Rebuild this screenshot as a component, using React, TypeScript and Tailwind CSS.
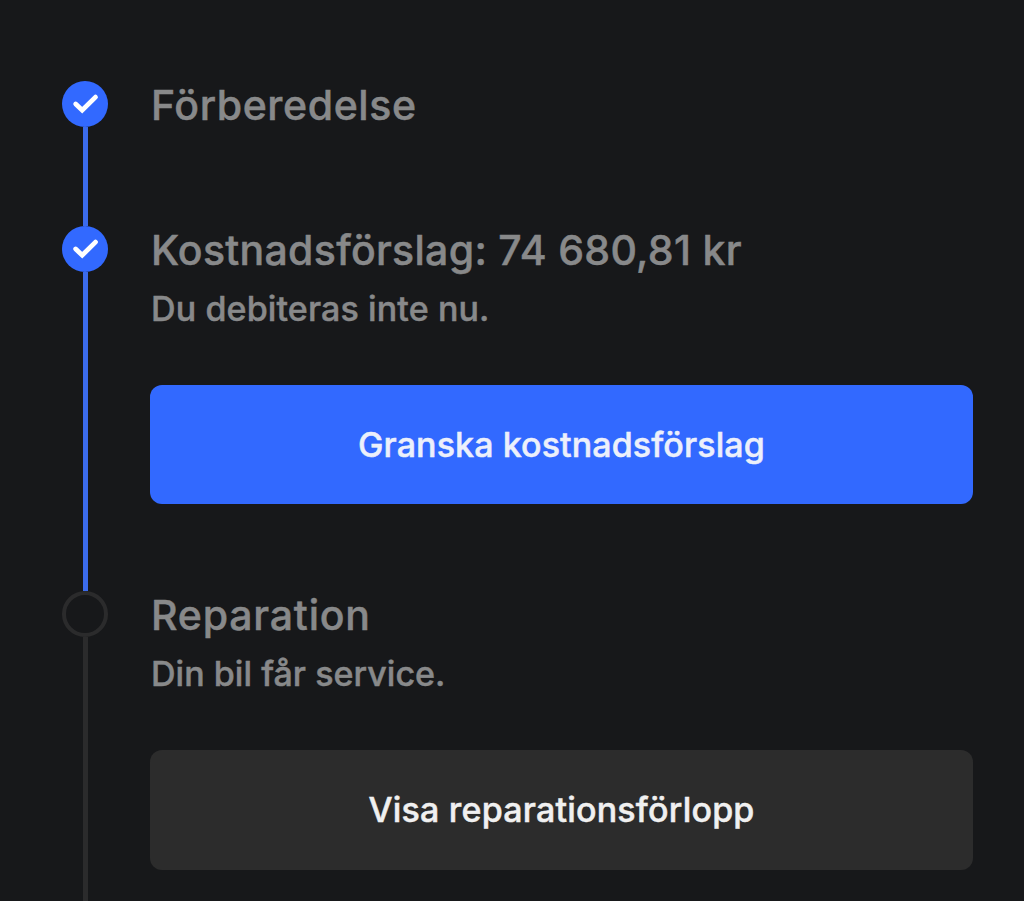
import type { ReactNode } from "react";

type StepProps = {
  title: string;
  description?: string;
  done?: boolean;
  className: string;
  titleClass: string;
  descriptionClass?: string;
  children?: ReactNode;
};

function StepMarker({ done }: { done?: boolean }) {
  if (!done) {
    return <span className="size-[46px] shrink-0 rounded-full border-4 border-[#2b2b2c]" />;
  }

  return (
    <span className="flex size-[46px] shrink-0 items-center justify-center rounded-full bg-[#3269ff]">
      <svg viewBox="0 0 46 46" className="size-full" fill="none" aria-hidden="true">
        <path
          d="M13.7 23L20.2 29.2L33.5 16.1"
          stroke="white"
          strokeWidth="4.8"
          strokeLinecap="round"
          strokeLinejoin="miter"
        />
      </svg>
    </span>
  );
}

function Step({ title, description, done, className, titleClass, descriptionClass, children }: StepProps) {
  return (
    <li className={`flex gap-[42px] ${className}`}>
      <div className="flex w-[46px] shrink-0 flex-col items-center">
        <StepMarker done={done} />
        <span className={`w-[5px] flex-1 ${done ? "bg-[#3b6bec]" : "bg-[#2b2b2c]"}`} />
      </div>

      <div className="min-w-0 flex-1">
        <h2 className={`pt-px pl-px text-[41px] leading-[46px] whitespace-nowrap ${titleClass}`}>
          {title}
        </h2>
        {description && (
          <p className={`mt-[14px] pl-px text-[34px] leading-[44px] whitespace-nowrap ${descriptionClass}`}>
            {description}
          </p>
        )}
        {children}
      </div>
    </li>
  );
}

function App() {
  return (
    <main className="h-[901px] w-[1024px] overflow-hidden bg-[#17181a] pt-[81px] pr-[51px] pl-[62px] font-[Inter,'Liberation_Sans',sans-serif] font-medium text-[#88898a] [-webkit-text-stroke:0.5px]">
      <ol>
        <Step done title="Förberedelse" className="h-[145px]" titleClass="tracking-[0.6px]" />

        <Step
          done
          title="Kostnadsförslag: 74 680,81 kr"
          description="Du debiteras inte nu."
          className="h-[365px]"
          titleClass="tracking-[0.3px]"
          descriptionClass="tracking-[0.12px]"
        >
          <button
            type="button"
            className="mt-[54px] h-[119px] w-full rounded-xl bg-[#3269ff] text-[34px] font-medium tracking-[0.1px] text-[#ecf0fb]"
          >
            Granska kostnadsförslag
          </button>
        </Step>

        <Step
          title="Reparation"
          description="Din bil får service."
          className="h-[310px]"
          titleClass="tracking-[0.8px]"
          descriptionClass="tracking-[0.04px]"
        >
          <button
            type="button"
            className="mt-[54px] h-[120px] w-full rounded-xl bg-[#2c2c2c] pb-0.5 text-[34px] font-medium tracking-[0.2px] text-[#f0f0f0]"
          >
            Visa reparationsförlopp
          </button>
        </Step>
      </ol>
    </main>
  );
}

export default App;
